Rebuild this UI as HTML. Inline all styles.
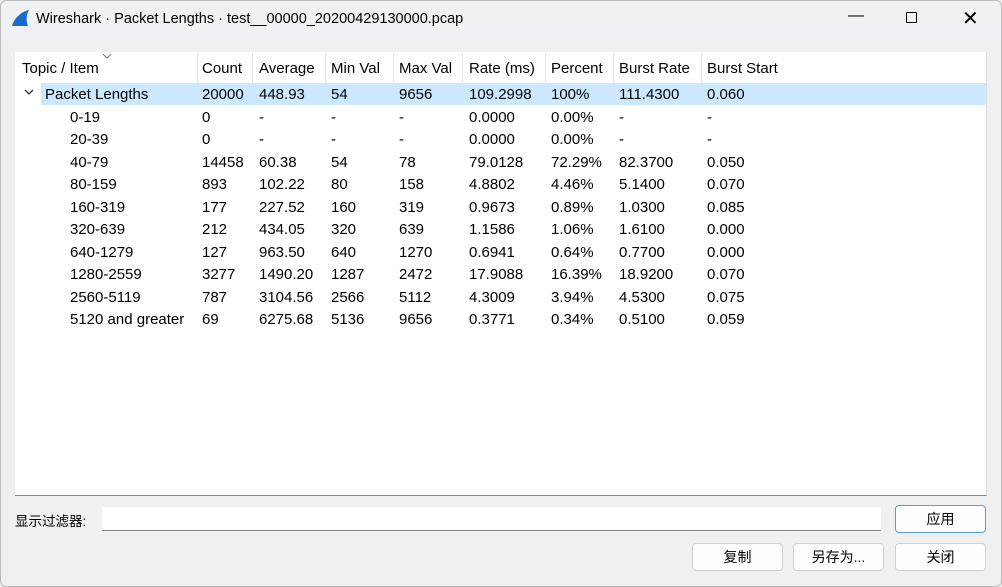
<!DOCTYPE html>
<html><head><meta charset="utf-8"><style>
*{margin:0;padding:0;box-sizing:border-box}
body{width:1002px;height:587px;background:#f0f0f0;font-family:"Liberation Sans","Noto Sans CJK SC",sans-serif;font-size:15px;letter-spacing:0;color:#000;position:relative;overflow:hidden}
.frame{position:absolute;left:0;top:0;width:1002px;height:587px;border:1px solid #bbb;border-radius:6px;pointer-events:none}
.t{position:absolute;white-space:nowrap}
.title{position:absolute;left:0;top:0;width:1002px;height:40px;background:#eff1f5}
.tbl{position:absolute;left:15px;top:52px;width:972px;height:444px;background:#fff;border-bottom:1px solid #888;border-right:1px solid #ddd}
.sep{position:absolute;top:53px;width:1px;height:30px;background:#e5e5e5}
.sel{position:absolute;left:41px;top:83px;width:945px;height:22px;background:#cce8ff}
.btn{position:absolute;height:28px;background:#fdfdfd;border:1px solid #d0d0d0;border-radius:4px;text-align:center;line-height:26px;font-size:14px}
</style></head><body>
<div class="title"></div>
<svg class="t" style="left:11px;top:9px" width="20" height="18" viewBox="0 0 20 18"><path d="M1 17 C3 10 9 3 18 1 C15 6 15 12 17 17 Z" fill="#1a6ad0"/></svg>
<div class="t" style="left:36px;top:11px;font-size:14.5px">Wireshark · Packet Lengths · test__00000_20200429130000.pcap</div>
<div class="t" style="left:848px;top:7px;font-size:16px">—</div>
<div class="t" style="left:906px;top:12px;width:11px;height:11px;border:1.3px solid #000;border-radius:1px"></div>
<div class="t" style="left:962px;top:6px;font-size:20px;font-weight:300">✕</div>
<div class="tbl"></div>
<div class="sel"></div>
<div class="sep" style="left:197px"></div><div class="sep" style="left:252px"></div><div class="sep" style="left:325px"></div><div class="sep" style="left:393px"></div><div class="sep" style="left:462px"></div><div class="sep" style="left:545px"></div><div class="sep" style="left:613px"></div><div class="sep" style="left:701px"></div>
<svg class="t" style="left:102px;top:53px" width="10" height="6"><path d="M1 1 L5 5 L9 1" stroke="#777" fill="none"/></svg>
<svg class="t" style="left:24px;top:89px" width="10" height="7"><path d="M1 1 L5 5 L9 1" stroke="#333" fill="none" stroke-width="1.3"/></svg>
<div id="rows"></div>
<script>
var cols=[22,202,259,331,399,469,551,619,707];
var data=[["Topic / Item","Count","Average","Min Val","Max Val","Rate (ms)","Percent","Burst Rate","Burst Start"],
["Packet Lengths","20000","448.93","54","9656","109.2998","100%","111.4300","0.060"],
["0-19","0","-","-","-","0.0000","0.00%","-","-"],
["20-39","0","-","-","-","0.0000","0.00%","-","-"],
["40-79","14458","60.38","54","78","79.0128","72.29%","82.3700","0.050"],
["80-159","893","102.22","80","158","4.8802","4.46%","5.1400","0.070"],
["160-319","177","227.52","160","319","0.9673","0.89%","1.0300","0.085"],
["320-639","212","434.05","320","639","1.1586","1.06%","1.6100","0.000"],
["640-1279","127","963.50","640","1270","0.6941","0.64%","0.7700","0.000"],
["1280-2559","3277","1490.20","1287","2472","17.9088","16.39%","18.9200","0.070"],
["2560-5119","787","3104.56","2566","5112","4.3009","3.94%","4.5300","0.075"],
["5120 and greater","69","6275.68","5136","9656","0.3771","0.34%","0.5100","0.059"]];
var h="";
data.forEach(function(r,i){var y=i==0?60:(83+(i-1)*22.5+3);r.forEach(function(c,j){var x=cols[j];if(j==0){if(i==1)x=45;else if(i>1)x=70;}h+='<div class="t" style="left:'+x+'px;top:'+y+'px">'+c+'</div>';});});
document.getElementById("rows").innerHTML=h;
</script>
<div class="t" style="left:15px;top:510px;font-size:13.5px">显示过滤器:</div>
<div class="t" style="left:102px;top:507px;width:779px;height:24px;background:#fff;border-bottom:1px solid #888"></div>
<div class="btn" style="left:895px;top:505px;width:91px;border-color:#5b9bd5">应用</div>
<div class="btn" style="left:692px;top:543px;width:91px">复制</div>
<div class="btn" style="left:793px;top:543px;width:91px">另存为...</div>
<div class="btn" style="left:895px;top:543px;width:91px">关闭</div>
<div class="frame"></div>
</body></html>
